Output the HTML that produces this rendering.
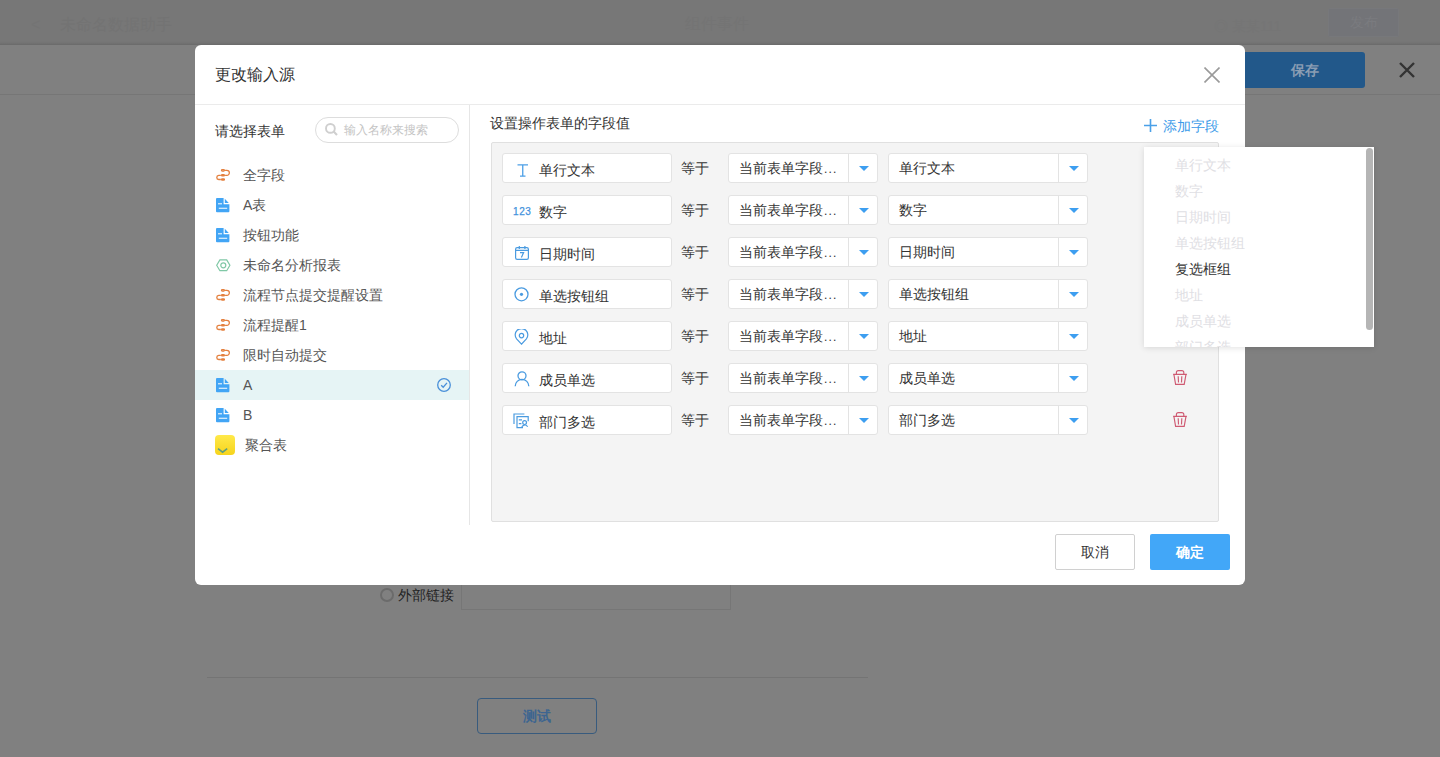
<!DOCTYPE html>
<html><head><meta charset="utf-8">
<style>
*{box-sizing:border-box;margin:0;padding:0}
html,body{width:1440px;height:757px;overflow:hidden}
body{position:relative;background:#808080;font-family:"Liberation Sans",sans-serif;font-size:14px;color:#333}
.a{position:absolute}
.t{position:absolute;white-space:nowrap;line-height:20px}
/* background page */
#hdr{left:0;top:0;width:1440px;height:45px;background:linear-gradient(#777 0,#777 41px,#737373 43px,#6e6e6e 44px);border-bottom:1px solid #6c6c6c}
#bar{left:0;top:94px;width:1440px;height:1px;background:#767676}
/* modal */
#modal{left:195px;top:45px;width:1050px;height:540px;background:#fff;border-radius:6px}
.hline{left:195px;top:104px;width:1050px;height:1px;background:#ebebeb}
.vline{left:469px;top:105px;width:1px;height:420px;background:#e6e6e6}
.li{position:absolute;left:195px;width:274px;height:30px}
.li .ic{position:absolute;left:21px;top:8px}
.li .tx{position:absolute;left:48px;top:5px;line-height:20px;color:#555;white-space:nowrap}
.sel{background:#e6f4f5}
#box{left:491px;top:142px;width:728px;height:380px;background:#f4f4f4;border:1px solid #e0e0e0;border-radius:2px}
.fld{position:absolute;left:502px;width:170px;height:30px;background:#fff;border:1px solid #e3e3e3;border-radius:3px}
.fld .ic{position:absolute;left:11px;top:7px}
.fld .tx{position:absolute;left:36px;top:6px;line-height:20px;color:#333;white-space:nowrap}
.eq{position:absolute;left:681px;line-height:20px;color:#333}
.s1,.s2{position:absolute;height:30px;background:#fff;border:1px solid #e3e3e3;border-radius:3px}
.s1{left:728px;width:150px}
.s2{left:888px;width:200px}
.s1 .d,.s2 .d{position:absolute;top:0;width:1px;height:28px;background:#e3e3e3}
.s1 .d{left:119px}.s2 .d{left:169px}
.s1 .ar,.s2 .ar{position:absolute;top:12px;width:0;height:0;border-left:5px solid transparent;border-right:5px solid transparent;border-top:5px solid #3d9ef0}
.s1 .ar{left:130px}.s2 .ar{left:180px}
.s1 .tx,.s2 .tx{position:absolute;left:10px;top:4px;line-height:20px;color:#333;white-space:nowrap}
.trash{position:absolute;left:1173px}
#pop{left:1144px;top:147px;width:230px;height:200px;background:#fff;box-shadow:0 1px 6px rgba(0,0,0,.12);overflow:hidden}
#pop .it{position:absolute;left:31px;line-height:20px;color:#dfe0e4;white-space:nowrap}
#pop .sb{position:absolute;left:222px;top:1px;width:7px;height:182px;border-radius:4px;background:#b5b5b5}
.btn{position:absolute;top:534px;width:80px;height:36px;border-radius:2px;text-align:center;line-height:34px}
</style></head><body>
<!-- background page -->
<div class="a" id="hdr"></div>
<div class="t" style="left:31px;top:15px;font-size:16px;color:#747474">&lt;</div>
<div class="t" style="left:60px;top:15px;font-size:16px;color:#737373">未命名数据助手</div>
<div class="t" style="left:685px;top:14px;font-size:16px;color:#747474">组件事件</div>
<div class="t" style="left:1214px;top:16px;font-size:14px;color:#757575">◎ 某某111</div>
<div class="a" style="left:1328px;top:8px;width:71px;height:29px;background:#737478;border:1px solid #77787b;border-radius:2px"></div>
<div class="t" style="left:1350px;top:12px;font-size:14px;color:#7a7b7f">发布</div>
<div class="a" id="bar"></div>
<div class="a" style="left:1225px;top:52px;width:140px;height:36px;background:#22588a;border-radius:3px"></div>
<div class="t" style="left:1291px;top:60px;font-size:14px;color:#8a9db3;font-weight:bold">保存</div>
<svg class="a" style="left:1399px;top:62px" width="16" height="16" viewBox="0 0 16 16"><path d="M1 1L15 15M15 1L1 15" stroke="#333" stroke-width="2.4"/></svg>
<div class="a" style="left:380px;top:588px;width:14px;height:14px;border:2px solid #6b6b6b;border-radius:50%"></div>
<div class="t" style="left:398px;top:585px;color:#222">外部链接</div>
<div class="a" style="left:461px;top:560px;width:270px;height:50px;border:1px solid #767676;border-radius:0"></div>
<div class="a" style="left:207px;top:677px;width:661px;height:1px;background:#747474"></div>
<div class="a" style="left:477px;top:698px;width:120px;height:36px;border:1px solid #385b7e;border-radius:4px"></div>
<div class="t" style="left:523px;top:706px;color:#3d6590;font-weight:bold">测试</div>

<!-- modal -->
<div class="a" id="modal"></div>
<div class="t" style="left:215px;top:64px;font-size:16px;line-height:22px;color:#333">更改输入源</div>
<svg class="a" style="left:1204px;top:67px" width="16" height="16" viewBox="0 0 16 16"><path d="M0.5 0.5L15.5 15.5M15.5 0.5L0.5 15.5" stroke="#9a9a9a" stroke-width="1.6"/></svg>
<div class="a hline"></div>
<div class="a vline"></div>

<div class="t" style="left:215px;top:121px;color:#333">请选择表单</div>
<div class="a" style="left:315px;top:117px;width:144px;height:26px;border:1px solid #ddd;border-radius:13px"></div>
<svg class="a" style="left:325px;top:123px" width="13" height="13" viewBox="0 0 13 13"><circle cx="5.4" cy="5.4" r="4.4" fill="none" stroke="#cfcfcf" stroke-width="1.9"/><path d="M8.6 8.6L12 12" stroke="#cfcfcf" stroke-width="2.1"/></svg>
<div class="t" style="left:344px;top:120px;font-size:12px;color:#c4c4c4">输入名称来搜索</div>

<div class="li" style="top:160px"><svg class="ic" width="15" height="14" viewBox="0 0 15 14" style="top:8px"><g fill="none" stroke="#e4803f" stroke-width="1.3"><rect x="5.5" y="1.65" width="2.9" height="1.4" rx=".7"/><rect x="5.55" y="6.75" width="2.85" height="1.2" rx=".6"/><rect x="5.55" y="10.85" width="2.85" height="1.3" rx=".6"/><path d="M9.07 2.35H10.85A2.5 2.5 0 0 1 10.85 7.35H9.07M4.85 7.35H2.73A2.08 2.08 0 0 0 2.73 11.5H4.85"/></g></svg><div class="tx">全字段</div></div>
<div class="li" style="top:190px"><svg class="ic" width="14" height="15" viewBox="0 0 14 15" style="top:8px"><path d="M0 1Q0 0 1 0H7.6V6.2H13.4V13.3Q13.4 14.3 12.4 14.3H1Q0 14.3 0 13.3Z M8.8 0.8L12.8 5H8.8Z" fill="#42a5f5"/><rect x="2" y="5.3" width="4" height="1" fill="#fff"/><rect x="2.8" y="9.7" width="8.4" height="1.2" fill="#dff1fd"/></svg><div class="tx">A表</div></div>
<div class="li" style="top:220px"><svg class="ic" width="14" height="15" viewBox="0 0 14 15" style="top:8px"><path d="M0 1Q0 0 1 0H7.6V6.2H13.4V13.3Q13.4 14.3 12.4 14.3H1Q0 14.3 0 13.3Z M8.8 0.8L12.8 5H8.8Z" fill="#42a5f5"/><rect x="2" y="5.3" width="4" height="1" fill="#fff"/><rect x="2.8" y="9.7" width="8.4" height="1.2" fill="#dff1fd"/></svg><div class="tx">按钮功能</div></div>
<div class="li" style="top:250px"><svg class="ic" width="15" height="13" viewBox="0 0 15 13" style="top:9px"><g fill="none" stroke="#80c8a6" stroke-width="1.2"><path d="M0.7 6.3L3.9 0.9H10.7L13.9 6.3L10.7 11.7H3.9Z"/><circle cx="7.3" cy="6.3" r="2.5"/></g></svg><div class="tx">未命名分析报表</div></div>
<div class="li" style="top:280px"><svg class="ic" width="15" height="14" viewBox="0 0 15 14" style="top:8px"><g fill="none" stroke="#e4803f" stroke-width="1.3"><rect x="5.5" y="1.65" width="2.9" height="1.4" rx=".7"/><rect x="5.55" y="6.75" width="2.85" height="1.2" rx=".6"/><rect x="5.55" y="10.85" width="2.85" height="1.3" rx=".6"/><path d="M9.07 2.35H10.85A2.5 2.5 0 0 1 10.85 7.35H9.07M4.85 7.35H2.73A2.08 2.08 0 0 0 2.73 11.5H4.85"/></g></svg><div class="tx">流程节点提交提醒设置</div></div>
<div class="li" style="top:310px"><svg class="ic" width="15" height="14" viewBox="0 0 15 14" style="top:8px"><g fill="none" stroke="#e4803f" stroke-width="1.3"><rect x="5.5" y="1.65" width="2.9" height="1.4" rx=".7"/><rect x="5.55" y="6.75" width="2.85" height="1.2" rx=".6"/><rect x="5.55" y="10.85" width="2.85" height="1.3" rx=".6"/><path d="M9.07 2.35H10.85A2.5 2.5 0 0 1 10.85 7.35H9.07M4.85 7.35H2.73A2.08 2.08 0 0 0 2.73 11.5H4.85"/></g></svg><div class="tx">流程提醒1</div></div>
<div class="li" style="top:340px"><svg class="ic" width="15" height="14" viewBox="0 0 15 14" style="top:8px"><g fill="none" stroke="#e4803f" stroke-width="1.3"><rect x="5.5" y="1.65" width="2.9" height="1.4" rx=".7"/><rect x="5.55" y="6.75" width="2.85" height="1.2" rx=".6"/><rect x="5.55" y="10.85" width="2.85" height="1.3" rx=".6"/><path d="M9.07 2.35H10.85A2.5 2.5 0 0 1 10.85 7.35H9.07M4.85 7.35H2.73A2.08 2.08 0 0 0 2.73 11.5H4.85"/></g></svg><div class="tx">限时自动提交</div></div>
<div class="li sel" style="top:370px"><svg class="ic" width="14" height="15" viewBox="0 0 14 15" style="top:8px"><path d="M0 1Q0 0 1 0H7.6V6.2H13.4V13.3Q13.4 14.3 12.4 14.3H1Q0 14.3 0 13.3Z M8.8 0.8L12.8 5H8.8Z" fill="#42a5f5"/><rect x="2" y="5.3" width="4" height="1" fill="#fff"/><rect x="2.8" y="9.7" width="8.4" height="1.2" fill="#dff1fd"/></svg><div class="tx">A</div>
<svg class="a" style="left:242px;top:8px" width="14" height="14" viewBox="0 0 14 14"><circle cx="7" cy="7" r="6.3" fill="none" stroke="#4a90d9" stroke-width="1.3"/><path d="M4.2 7.2L6.2 9.2L10 4.8" fill="none" stroke="#4a90d9" stroke-width="1.3"/></svg></div>
<div class="li" style="top:400px"><svg class="ic" width="14" height="15" viewBox="0 0 14 15" style="top:8px"><path d="M0 1Q0 0 1 0H7.6V6.2H13.4V13.3Q13.4 14.3 12.4 14.3H1Q0 14.3 0 13.3Z M8.8 0.8L12.8 5H8.8Z" fill="#42a5f5"/><rect x="2" y="5.3" width="4" height="1" fill="#fff"/><rect x="2.8" y="9.7" width="8.4" height="1.2" fill="#dff1fd"/></svg><div class="tx">B</div></div>
<div class="li" style="top:430px"><svg class="ic" width="20" height="20" viewBox="0 0 20 20" style="left:20px;top:5px"><defs><linearGradient id="yg" x1="0" y1="0" x2="0" y2="1"><stop offset="0" stop-color="#ffe94a"/><stop offset="1" stop-color="#f6d41c"/></linearGradient></defs><rect x="0" y="0" width="20" height="20" rx="4" fill="url(#yg)"/><path d="M3 13.6L7.6 17.2L12.2 13.6" fill="none" stroke="#5f9f7f" stroke-width="1.6"/></svg><div class="tx" style="left:50px">聚合表</div></div>

<!-- right panel -->
<div class="t" style="left:490px;top:113px;color:#333">设置操作表单的字段值</div>
<svg class="a" style="left:1144px;top:119px" width="13" height="13" viewBox="0 0 13 13"><path d="M6.5 0V13M0 6.5H13" stroke="#4aa0e8" stroke-width="1.6"/></svg>
<div class="t" style="left:1163px;top:116px;color:#3d9be9">添加字段</div>

<div class="a" id="box"></div>
<!--rows-->
<div class="fld" style="top:153px"><svg class="ic" width="12" height="13" viewBox="0 0 12 13" style="left:14px;top:10px"><path d="M0.5 0.8H11M5.75 0.8V12.2M3 12.2H8.5" fill="none" stroke="#4c9fe6" stroke-width="1.3"/></svg><div class="tx">单行文本</div></div>
<div class="eq" style="top:158px">等于</div>
<div class="s1" style="top:153px"><div class="tx">当前表单字段<span style="font-size:12px;letter-spacing:1.2px;margin-left:1px">...</span></div><div class="d"></div><div class="ar"></div></div>
<div class="s2" style="top:153px"><div class="tx">单行文本</div><div class="d"></div><div class="ar"></div></div>
<div class="fld" style="top:195px"><div class="ic" style="position:absolute;left:10px;top:9px;font-size:10px;line-height:14px;color:#3f92dc;letter-spacing:0.6px;-webkit-text-stroke:0.25px #3f92dc">123</div><div class="tx">数字</div></div>
<div class="eq" style="top:200px">等于</div>
<div class="s1" style="top:195px"><div class="tx">当前表单字段<span style="font-size:12px;letter-spacing:1.2px;margin-left:1px">...</span></div><div class="d"></div><div class="ar"></div></div>
<div class="s2" style="top:195px"><div class="tx">数字</div><div class="d"></div><div class="ar"></div></div>
<div class="fld" style="top:237px"><svg class="ic" width="14" height="14" viewBox="0 0 14 14" style="left:12px;top:8px"><g fill="none" stroke="#4a9be0" stroke-width="1.2"><rect x="0.6" y="1.6" width="12.8" height="11.8" rx="1.6"/><path d="M0.6 4.4H13.4M4.3 0V3M9.9 0V3M5 6.6H8.6L6.4 11.4"/></g></svg><div class="tx">日期时间</div></div>
<div class="eq" style="top:242px">等于</div>
<div class="s1" style="top:237px"><div class="tx">当前表单字段<span style="font-size:12px;letter-spacing:1.2px;margin-left:1px">...</span></div><div class="d"></div><div class="ar"></div></div>
<div class="s2" style="top:237px"><div class="tx">日期时间</div><div class="d"></div><div class="ar"></div></div>
<div class="fld" style="top:279px"><svg class="ic" width="15" height="15" viewBox="0 0 15 15" style="left:11px;top:7px"><circle cx="7.5" cy="7.3" r="6.5" fill="none" stroke="#4a9be0" stroke-width="1.3"/><circle cx="7.5" cy="7.3" r="1.6" fill="#4a9be0"/></svg><div class="tx">单选按钮组</div></div>
<div class="eq" style="top:284px">等于</div>
<div class="s1" style="top:279px"><div class="tx">当前表单字段<span style="font-size:12px;letter-spacing:1.2px;margin-left:1px">...</span></div><div class="d"></div><div class="ar"></div></div>
<div class="s2" style="top:279px"><div class="tx">单选按钮组</div><div class="d"></div><div class="ar"></div></div>
<div class="fld" style="top:321px"><svg class="ic" width="15" height="16" viewBox="0 0 15 16" style="left:11px;top:7px"><g fill="none" stroke="#4a9be0" stroke-width="1.2"><path d="M7.5 15.2L2.6 9.8A6.3 6.3 0 1 1 12.4 9.8Z"/><circle cx="7.5" cy="6.6" r="2.2"/></g></svg><div class="tx">地址</div></div>
<div class="eq" style="top:326px">等于</div>
<div class="s1" style="top:321px"><div class="tx">当前表单字段<span style="font-size:12px;letter-spacing:1.2px;margin-left:1px">...</span></div><div class="d"></div><div class="ar"></div></div>
<div class="s2" style="top:321px"><div class="tx">地址</div><div class="d"></div><div class="ar"></div></div>
<div class="fld" style="top:363px"><svg class="ic" width="16" height="16" viewBox="0 0 16 16" style="left:11px;top:7px"><g fill="none" stroke="#4a9be0" stroke-width="1.3"><circle cx="8" cy="4.8" r="4"/><path d="M1.2 15.2A6.8 6.8 0 0 1 14.8 15.2"/></g></svg><div class="tx">成员单选</div></div>
<div class="eq" style="top:368px">等于</div>
<div class="s1" style="top:363px"><div class="tx">当前表单字段<span style="font-size:12px;letter-spacing:1.2px;margin-left:1px">...</span></div><div class="d"></div><div class="ar"></div></div>
<div class="s2" style="top:363px"><div class="tx">成员单选</div><div class="d"></div><div class="ar"></div></div>
<svg class="trash" width="24" height="24" viewBox="0 0 24 24" style="left:1168px;top:366px"><g fill="none" stroke="#cf5a72" stroke-width="1.15"><path d="M8.4 8.4V6.6Q8.4 4.6 10.4 4.6H13.8Q15.8 4.6 15.8 6.6V8.4M5.1 8.4H18.9M5.9 8.4L7.6 18.4H16.2L18 8.4M10.2 10.2L10.5 16.5M13.8 10.2L13.5 16.5"/></g></svg>
<div class="fld" style="top:405px"><svg class="ic" width="16" height="16" viewBox="0 0 16 16" style="left:10px;top:7px"><g fill="none" stroke="#4a9be0" stroke-width="1.2"><path d="M1 11V1H11.4"/><path d="M10 14.6H4V3.6H15.2V8.2"/><path d="M5.8 6.8H9M5.8 10.6H8.4"/><circle cx="11.6" cy="9.6" r="1.9"/><path d="M8.6 14.6A3.2 3.2 0 0 1 14.6 13.8"/></g></svg><div class="tx">部门多选</div></div>
<div class="eq" style="top:410px">等于</div>
<div class="s1" style="top:405px"><div class="tx">当前表单字段<span style="font-size:12px;letter-spacing:1.2px;margin-left:1px">...</span></div><div class="d"></div><div class="ar"></div></div>
<div class="s2" style="top:405px"><div class="tx">部门多选</div><div class="d"></div><div class="ar"></div></div>
<svg class="trash" width="24" height="24" viewBox="0 0 24 24" style="left:1168px;top:408px"><g fill="none" stroke="#cf5a72" stroke-width="1.15"><path d="M8.4 8.4V6.6Q8.4 4.6 10.4 4.6H13.8Q15.8 4.6 15.8 6.6V8.4M5.1 8.4H18.9M5.9 8.4L7.6 18.4H16.2L18 8.4M10.2 10.2L10.5 16.5M13.8 10.2L13.5 16.5"/></g></svg>
<!--/rows-->

<div id="pop" class="a">
 <div class="it" style="top:8px">单行文本</div>
 <div class="it" style="top:34px">数字</div>
 <div class="it" style="top:60px">日期时间</div>
 <div class="it" style="top:86px">单选按钮组</div>
 <div class="it" style="top:112px;color:#333">复选框组</div>
 <div class="it" style="top:138px">地址</div>
 <div class="it" style="top:164px">成员单选</div>
 <div class="it" style="top:190px">部门多选</div>
 <div class="sb"></div>
</div>

<div class="btn" style="left:1055px;border:1px solid #d0d0d0;background:#fff;color:#333">取消</div>
<div class="btn" style="left:1150px;background:#42a7f8;color:#fff;font-weight:bold;line-height:36px">确定</div>
</body></html>
